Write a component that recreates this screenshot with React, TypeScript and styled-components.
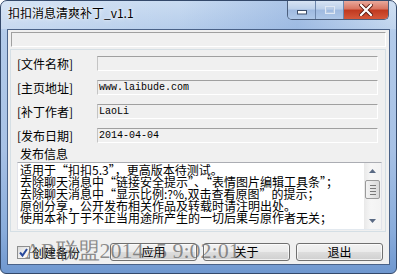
import styled, { createGlobalStyle } from "styled-components";

const GlobalStyle = createGlobalStyle`
  html, body {
    margin: 0;
    padding: 0;
    background: #ffffff;
  }
  body {
    font-family: "Noto Sans CJK SC", "Noto Sans", sans-serif;
    font-size: 12px;
  }
`;

const infoLines = [
  "适用于“扣扣5.3”，更高版本待测试。",
  "去除聊天消息中“链接安全提示”、“表情图片编辑工具条”；",
  "去除聊天消息中“显示比例:?%,双击查看原图”的提示；",
  "原创分享，公开发布相关作品及转载时请注明出处。",
  "使用本补丁于不正当用途所产生的一切后果与原作者无关；",
];

const fields = [
  { label: "[文件名称]", value: "" },
  { label: "[主页地址]", value: "www.laibude.com" },
  { label: "[补丁作者]", value: "LaoLi" },
  { label: "[发布日期]", value: "2014-04-04" },
];

export default function App() {
  return (
    <>
      <GlobalStyle />
      <Window>
        <TitleBar>
          <Title>扣扣消息清爽补丁_v1.1</Title>
          <Captions>
            <CaptionBtn $w={28}>
              <svg width="12" height="6" viewBox="0 0 12 6">
                <rect x="1.5" y="1.5" width="9" height="3.5" fill="#fff" stroke="#3d4f6b" strokeWidth="1" />
              </svg>
            </CaptionBtn>
            <CaptionBtn $w={28}>
              <svg width="12" height="10" viewBox="0 0 12 10" style={{ marginTop: -4 }}>
                <rect x="1.5" y="1.5" width="9" height="7" fill="none" stroke="#dfe8f4" strokeWidth="1" />
                <rect x="2.5" y="3" width="7" height="4.5" fill="none" stroke="#b5c8e2" strokeWidth="1" />
              </svg>
            </CaptionBtn>
            <CloseBtn>
              <svg width="14" height="12" viewBox="0 0 14 12" style={{ marginTop: -3 }}>
                <path d="M2 1 L12 11 M12 1 L2 11" stroke="#5b1a10" strokeWidth="4" strokeLinecap="square" />
                <path d="M2 1 L12 11 M12 1 L2 11" stroke="#ffffff" strokeWidth="2.2" strokeLinecap="square" />
              </svg>
            </CloseBtn>
          </Captions>
        </TitleBar>

        <Client>
          <TopField />
          <Panel>
            <Rows>
              {fields.map((f) => (
                <Row key={f.label}>
                  <Label>{f.label}</Label>
                  <Field>{f.value}</Field>
                </Row>
              ))}
            </Rows>
            <InfoLabel>发布信息</InfoLabel>
            <TextBox>
              <TextLines>
                {infoLines.map((l) => (
                  <Line key={l}>{l}</Line>
                ))}
              </TextLines>
              <ScrollBar>
                <Arrow>
                  <svg width="7" height="4" viewBox="0 0 7 4">
                    <path d="M0 4 L3.5 0 L7 4 Z" fill="#5a6a84" />
                  </svg>
                </Arrow>
                <Track>
                  <Thumb>
                    <Grip />
                    <Grip />
                    <Grip />
                    <Grip />
                  </Thumb>
                </Track>
                <Arrow>
                  <svg width="7" height="4" viewBox="0 0 7 4">
                    <path d="M0 0 L3.5 4 L7 0 Z" fill="#5a6a84" />
                  </svg>
                </Arrow>
              </ScrollBar>
            </TextBox>
          </Panel>

          <BottomRow>
            <CheckLabel>
              <CheckBox>
                <svg width="11" height="11" viewBox="0 0 11 11">
                  <path d="M2 5.5 L4.5 8.5 L9 2" fill="none" stroke="#2a4a9c" strokeWidth="2" />
                </svg>
              </CheckBox>
              创建备份
            </CheckLabel>
            <Buttons>
              <Button>应用</Button>
              <Button>关于</Button>
              <Button>退出</Button>
            </Buttons>
          </BottomRow>
        </Client>

        <Watermark>AR联盟2014−5 9:02:01</Watermark>
      </Window>
    </>
  );
}

const Window = styled.div`
  position: relative;
  width: 397px;
  height: 274px;
  box-sizing: border-box;
  border: 1px solid #34496a;
  border-radius: 7px 7px 6px 6px;
  overflow: hidden;
  display: flex;
  flex-direction: column;
  background: linear-gradient(180deg, #c9dbf1 0%, #b3cbea 12%, #a7c1e5 55%, #89acdb 85%, #6f97cf 100%);
`;

const TitleBar = styled.div`
  height: 28px;
  display: flex;
  align-items: flex-start;
  padding-left: 7px;
  background: linear-gradient(90deg, rgba(255, 255, 255, 0.25) 0%, rgba(255, 255, 255, 0) 45%, rgba(110, 150, 210, 0.35) 75%, rgba(255, 255, 255, 0.15) 100%);
`;

const Title = styled.div`
  margin-top: 4px;
  line-height: 16px;
  font-size: 12px;
  color: #000;
  white-space: nowrap;
  text-shadow: 0 0 5px rgba(255, 255, 255, 0.95), 0 0 2px rgba(255, 255, 255, 0.9);
`;

const Captions = styled.div`
  margin-left: auto;
  margin-right: 7px;
  display: flex;
  height: 18px;
  border: 1px solid #4c5f7d;
  border-top: none;
  border-radius: 0 0 5px 5px;
  overflow: hidden;
`;

const CaptionBtn = styled.div<{ $w: number }>`
  width: ${(p) => p.$w}px;
  display: flex;
  align-items: center;
  justify-content: center;
  padding-top: 4px;
  box-sizing: border-box;
  border-right: 1px solid #6d86ab;
  background: linear-gradient(180deg, #d6e3f3 0%, #bcd0ea 45%, #9fbae0 50%, #aec7e8 100%);
`;

const CloseBtn = styled.div`
  width: 44px;
  display: flex;
  align-items: center;
  justify-content: center;
  padding-top: 2px;
  box-sizing: border-box;
  background: linear-gradient(180deg, #e9a99c 0%, #d8735f 45%, #c0391f 50%, #d5583b 100%);
`;

const Client = styled.div`
  flex: 1;
  margin: 0 6px 8px 6px;
  border: 1px solid #4a6288;
  background: #f0f0f0;
  display: flex;
  flex-direction: column;
`;

const TopField = styled.div`
  margin: 2px 3px 0 3px;
  height: 15px;
  box-sizing: border-box;
  border-top: 1px solid #a0a0a0;
  border-left: 1px solid #a0a0a0;
  border-right: 1px solid #ffffff;
  border-bottom: 1px solid #ffffff;
  background: #f0f0f0;
`;

const Panel = styled.div`
  margin: 2px 3px 0 2px;
  height: 183px;
  box-sizing: border-box;
  border: 1px solid #d5dfe5;
  padding: 6px 3px 0 6px;
  display: flex;
  flex-direction: column;
`;

const Rows = styled.div`
  display: flex;
  flex-direction: column;
  gap: 9px;
`;

const Row = styled.div`
  display: flex;
  align-items: center;
  height: 15px;
`;

const Label = styled.div`
  width: 80px;
  font-size: 12px;
  line-height: 15px;
  color: #000;
  white-space: nowrap;
`;

const Field = styled.div`
  flex: 1;
  margin-right: 4px;
  height: 15px;
  box-sizing: border-box;
  border-top: 1px solid #a0a0a0;
  border-left: 1px solid #c4c4c4;
  border-right: 1px solid #ffffff;
  border-bottom: 1px solid #ffffff;
  padding-left: 1px;
  font-family: "Liberation Mono", monospace;
  font-size: 10px;
  line-height: 13px;
  color: #000;
  white-space: nowrap;
`;

const InfoLabel = styled.div`
  margin-top: 5px;
  padding-left: 3px;
  line-height: 12px;
  font-size: 12px;
  color: #000;
`;

const TextBox = styled.div`
  margin-top: 2px;
  height: 68px;
  box-sizing: border-box;
  border: 1px solid #e2e3ea;
  border-top-color: #abadb3;
  border-bottom-color: #e3e9ef;
  background: #ffffff;
  display: flex;
`;

const TextLines = styled.div`
  flex: 1;
  overflow: hidden;
  padding: 1px 0 0 2px;
`;

const Line = styled.div`
  font-size: 12px;
  line-height: 12px;
  color: #000;
  white-space: nowrap;
`;

const ScrollBar = styled.div`
  width: 17px;
  display: flex;
  flex-direction: column;
  background: linear-gradient(90deg, #e9e9e9 0%, #f6f6f6 40%, #f3f3f3 100%);
`;

const Arrow = styled.div`
  height: 16px;
  display: flex;
  align-items: center;
  justify-content: center;
`;

const Track = styled.div`
  flex: 1;
  padding: 1px 1px 0 1px;
`;

const Thumb = styled.div`
  height: 19px;
  box-sizing: border-box;
  border: 1px solid #9a9a9a;
  border-radius: 2px;
  background: linear-gradient(90deg, #f3f3f3 0%, #e6e6e6 50%, #d9d9d9 100%);
  display: flex;
  flex-direction: column;
  align-items: center;
  justify-content: center;
  gap: 2px;
`;

const Grip = styled.div`
  width: 6px;
  height: 1px;
  background: #7a7a7a;
`;

const BottomRow = styled.div`
  margin-top: 11px;
  height: 18px;
  display: flex;
  align-items: center;
  padding: 0 6px 0 9px;
`;

const CheckLabel = styled.div`
  display: flex;
  align-items: center;
  gap: 2px;
  font-size: 12px;
  color: #000;
  white-space: nowrap;
`;

const CheckBox = styled.div`
  width: 13px;
  height: 13px;
  box-sizing: border-box;
  border: 1px solid #8e8f8f;
  background: linear-gradient(135deg, #dadada 0%, #f4f4f4 60%, #ffffff 100%);
  display: flex;
  align-items: center;
  justify-content: center;
`;

const Buttons = styled.div`
  margin-left: auto;
  display: flex;
  gap: 6px;
`;

const Button = styled.div`
  width: 87px;
  height: 18px;
  box-sizing: border-box;
  border: 1px solid #707070;
  border-radius: 3px;
  background: linear-gradient(180deg, #f2f2f2 0%, #ebebeb 48%, #dddddd 52%, #cfcfcf 100%);
  box-shadow: inset 0 0 0 1px rgba(255, 255, 255, 0.7);
  display: flex;
  align-items: center;
  justify-content: center;
  font-size: 12px;
  line-height: 16px;
  color: #000;
`;

const Watermark = styled.div`
  position: absolute;
  left: 24px;
  top: 238px;
  font-family: "Liberation Serif", serif;
  font-size: 22px;
  line-height: 24px;
  color: rgba(100, 100, 100, 0.72);
  white-space: nowrap;
  pointer-events: none;
`;
